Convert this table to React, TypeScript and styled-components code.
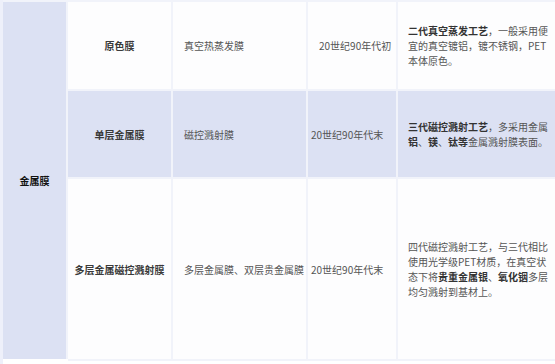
import styled, { createGlobalStyle } from 'styled-components';

const GlobalStyle = createGlobalStyle`
	html, body {
		margin: 0;
		padding: 0;
		background: #ffffff;
		overflow: hidden;
	}
	body {
		font-family: 'Noto Sans CJK SC', 'Noto Sans', sans-serif;
	}
`;

const Page = styled.div`
	width: 555px;
	height: 364px;
	overflow: hidden;
	padding-left: 3px;
	box-sizing: border-box;
	background: linear-gradient(to right, #eef0fa 0, #eef0fa 3px, #ffffff 3px);
`;

const Table = styled.table`
	border-collapse: collapse;
	table-layout: fixed;
	width: 640px;
	font-size: 10px;
	color: #555;
`;

const Row = styled.tr<{ $shade?: boolean }>`
	background: ${({ $shade }) => ($shade ? '#dce1f3' : '#fdfdfe')};
`;

const Cell = styled.td<{ $height?: number; $align?: string; $pad?: number }>`
	height: ${({ $height }) => $height ?? 88}px;
	padding: 0 4px 0 ${({ $pad }) => $pad ?? 10}px;
	border: 2px solid #f1f3fa;
	text-align: ${({ $align }) => $align ?? 'left'};
	vertical-align: middle;
	line-height: 15px;
	white-space: nowrap;
	box-sizing: border-box;
`;

const GroupCell = styled.td`
	background: #dce1f3;
	border: 2px solid #f1f3fa;
	border-left: none;
	border-bottom: 3px solid #ffffff;
	text-align: center;
	vertical-align: middle;
	font-weight: 700;
	color: #111;
	font-size: 10px;
	padding: 0;
`;

const NameCell = styled(Cell)`
	color: #3a3a3a;
	font-weight: 600;
	padding: 0;
`;

const Strong = styled.b`
	font-weight: 700;
	color: #333;
`;

const rows = [
	{
		name: '原色膜',
		kind: '真空热蒸发膜',
		era: '20世纪90年代初',
		eraPad: 11,
		height: 89,
		shade: false,
		desc: (
			<>
				<Strong>二代真空蒸发工艺</Strong>，一般采用便<br />
				宜的真空镀铝，镀不锈钢，PET<br />
				本体原色。
			</>
		),
	},
	{
		name: '单层金属膜',
		kind: '磁控溅射膜',
		era: '20世纪90年代末',
		eraPad: 3,
		height: 88,
		shade: true,
		desc: (
			<>
				<Strong>三代磁控溅射工艺</Strong>，多采用金属<br />
				<Strong>铝</Strong>、<Strong>镁</Strong>、<Strong>钛等</Strong>金属溅射膜表面。
			</>
		),
	},
	{
		name: '多层金属磁控溅射膜',
		kind: '多层金属膜、双层贵金属膜',
		era: '20世纪90年代末',
		eraPad: 3,
		height: 182,
		shade: false,
		desc: (
			<>
				四代磁控溅射工艺，与三代相比<br />
				使用光学级PET材质，在真空状<br />
				态下将<Strong>贵重金属银</Strong>、<Strong>氧化铟</Strong>多层<br />
				均匀溅射到基材上。
			</>
		),
	},
];

export default function App() {
	return (
		<>
			<GlobalStyle />
			<Page>
				<Table>
					<colgroup>
						<col style={{ width: 64 }} />
						<col style={{ width: 105 }} />
						<col style={{ width: 135 }} />
						<col style={{ width: 90 }} />
						<col style={{ width: 246 }} />
					</colgroup>
					<tbody>
						{rows.map((row, index) => (
							<Row key={`row-${index}`} $shade={row.shade}>
								{index === 0 && <GroupCell rowSpan={rows.length}>金属膜</GroupCell>}
								<NameCell $height={row.height} $align="center">
									{row.name}
								</NameCell>
								<Cell $height={row.height} $pad={11}>
									{row.kind}
								</Cell>
								<Cell $height={row.height} $pad={row.eraPad}>
									{row.era}
								</Cell>
								<Cell $height={row.height} $pad={10}>
									{row.desc}
								</Cell>
							</Row>
						))}
					</tbody>
				</Table>
			</Page>
		</>
	);
}
